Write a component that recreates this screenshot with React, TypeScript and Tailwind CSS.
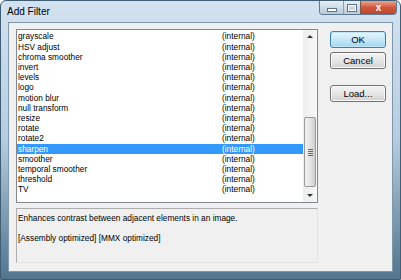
const FILTERS = [
  "grayscale",
  "HSV adjust",
  "chroma smoother",
  "invert",
  "levels",
  "logo",
  "motion blur",
  "null transform",
  "resize",
  "rotate",
  "rotate2",
  "sharpen",
  "smoother",
  "temporal smoother",
  "threshold",
  "TV",
];

const SELECTED = "sharpen";

const font = { fontFamily: '"Liberation Sans", Arial, sans-serif' };

const DialogButton = ({ label, primary }: { label: string; primary?: boolean }) => (
  <button
    type="button"
    className={`h-[17px] w-[56px] rounded-[3px] border text-[9.5px] leading-none text-black ${
      primary
        ? "border-[#3c7fb1] bg-gradient-to-b from-[#eaf7fd] via-[#c6e8f8] to-[#a3d6f1] shadow-[inset_0_0_0_1px_#bfe6fa]"
        : "border-[#707070] bg-gradient-to-b from-[#f4f4f4] via-[#e6e6e6] to-[#d2d2d2] shadow-[inset_0_0_0_1px_#fafafa]"
    }`}
  >
    {label}
  </button>
);

const ScrollBar = () => (
  <div className="flex h-full w-[14px] flex-col bg-gradient-to-r from-[#ededed] to-[#f8f8f8]">
    <div className="flex h-[12px] items-center justify-center">
      <div className="h-0 w-0 border-x-[3px] border-b-[3px] border-x-transparent border-b-[#333]" />
    </div>
    <div className="flex-1" />
    <div className="mx-[1px] mb-[1px] flex h-[70px] items-center justify-center rounded-[2px] border border-[#999] bg-gradient-to-r from-[#f3f3f3] via-[#e4e4e4] to-[#cfcfcf]">
      <div className="flex flex-col gap-[1px]">
        <div className="h-px w-[5px] bg-[#666]" />
        <div className="h-px w-[5px] bg-[#666]" />
        <div className="h-px w-[5px] bg-[#666]" />
        <div className="h-px w-[5px] bg-[#666]" />
      </div>
    </div>
    <div className="flex h-[14px] items-center justify-center">
      <div className="h-0 w-0 border-x-[3px] border-t-[3px] border-x-transparent border-t-[#333]" />
    </div>
  </div>
);

export default function App() {
  return (
    <div
      className="flex h-[280px] w-[401px] flex-col overflow-hidden rounded-t-[6px] border border-[#3f5d75] bg-gradient-to-b from-[#d3e2f0] via-[#b6cce0] to-[#52758d]"
      style={font}
    >
      {/* title bar */}
      <div className="flex h-[21px] items-start">
        <span className="ml-[6px] mt-[3px] text-[10px] text-black">Add Filter</span>
        <div className="flex-1" />
        <div className="mr-[3px] flex h-[14px] overflow-hidden rounded-b-[4px] border border-t-0 border-[#5e7a92]">
          <div className="flex w-[24px] items-center justify-center border-r border-[#8aa2b8] bg-gradient-to-b from-[#e8eff6] to-[#b7c9da]">
            <div className="mt-[4px] h-[2px] w-[8px] bg-white shadow-[0_0_0_1px_#5d7286]" />
          </div>
          <div className="flex w-[17px] items-center justify-center border-r border-[#7b5a52] bg-gradient-to-b from-[#e8eff6] to-[#b7c9da]">
            <div className="h-[6px] w-[8px] border border-white shadow-[0_0_0_1px_#5d7286]" />
          </div>
          <div className="flex w-[35px] items-center justify-center bg-gradient-to-b from-[#e9a493] via-[#d0573c] to-[#c0432a] text-[10px] font-bold leading-none text-white">
            x
          </div>
        </div>
      </div>

      {/* client area */}
      <div className="mx-[7px] mb-[7px] flex flex-1 flex-col border border-[#7f97ab] bg-[#f0f0f0] pb-[8px] pl-[7px] pr-[6px] pt-[6px]">
        <div className="flex gap-[12px]">
          <div className="flex h-[174px] w-[302px] border border-[#828790] bg-white">
            <div className="flex-1 pt-[1.5px]">
              {FILTERS.map((name) => {
                const sel = name === SELECTED;
                return (
                  <div
                    key={name}
                    className={`flex h-[10.2px] items-center text-[8.3px] leading-none ${
                      sel ? "bg-[#3399ff] text-white" : "text-black"
                    }`}
                  >
                    <span className="w-[205px] pl-[1px]">{name}</span>
                    <span>(internal)</span>
                  </div>
                );
              })}
            </div>
            <ScrollBar />
          </div>
          <div className="flex flex-col pt-[2px]">
            <DialogButton label="OK" primary />
            <div className="h-[4px]" />
            <DialogButton label="Cancel" />
            <div className="h-[16px]" />
            <DialogButton label="Load..." />
          </div>
        </div>
        <div className="mt-[5px] h-[55px] w-[302px] border border-b-[#e3e3e3] border-l-[#adadad] border-r-[#e3e3e3] border-t-[#adadad] px-[1px] pt-[4px] text-[8.3px] leading-[10px] text-black">
          <div>Enhances contrast between adjacent elements in an image.</div>
          <div className="mt-[10px]">[Assembly optimized] [MMX optimized]</div>
        </div>
      </div>
    </div>
  );
}
